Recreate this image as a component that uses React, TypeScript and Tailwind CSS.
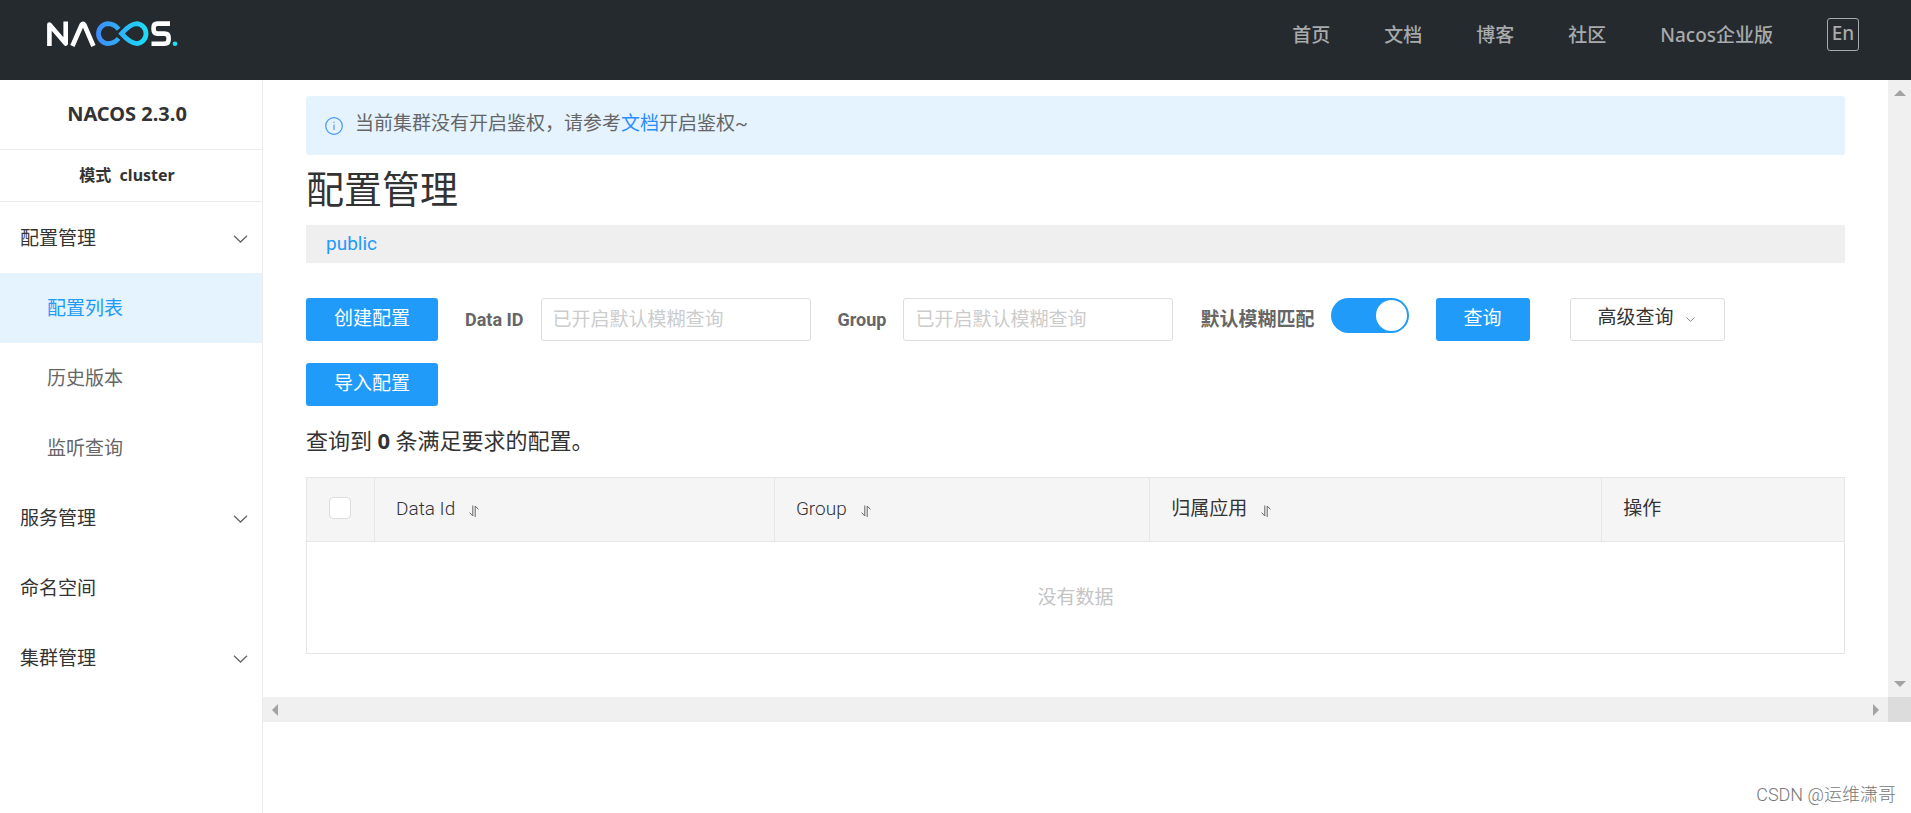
import { useState } from 'react';

const NAV_LINKS = ['首页', '文档', '博客', '社区', 'Nacos企业版'];

interface MenuItem {
  label: string;
  expandable?: boolean;
  child?: boolean;
}

const MENU: MenuItem[] = [
  { label: '配置管理', expandable: true },
  { label: '配置列表', child: true },
  { label: '历史版本', child: true },
  { label: '监听查询', child: true },
  { label: '服务管理', expandable: true },
  { label: '命名空间' },
  { label: '集群管理', expandable: true },
];

function Logo() {
  return (
    <svg width="132" height="26" viewBox="0 0 132 26" fill="none" role="img" aria-label="Nacos">
      <defs>
        <linearGradient id="loop" x1="48" y1="0" x2="102" y2="0" gradientUnits="userSpaceOnUse">
          <stop offset="0" stopColor="#4088fb" />
          <stop offset="1" stopColor="#1ae1f8" />
        </linearGradient>
      </defs>
      <g stroke="#fff" strokeWidth="4.6" strokeLinejoin="round">
        <path d="M2.4 25V3.6L18.7 22.6V0.6" />
        <path d="M25.4 25L34.6 4Q36 1.6 37.4 4L46.4 25" />
        <path d="M123 2.6H110.5Q106.6 2.6 106.6 6.5V8.5Q106.6 12.6 110.5 12.6H117.5Q121.6 12.6 121.6 16.5V18.8Q121.6 22.7 117.5 22.7H104.5" />
      </g>
      <path
        d="M71.6 8.2Q67 2.7 60.5 2.7A10 10 0 0 0 60.5 22.6Q67 22.6 71.6 17.5M90 2.7A10 10 0 0 1 90 22.6Q83.5 22.6 74.5 12.7Q83.5 2.7 90 2.7Z"
        stroke="url(#loop)"
        strokeWidth="4.8"
      />
      <circle cx="128" cy="22.8" r="2.3" fill="#1ae1f8" />
    </svg>
  );
}

function Chevron({ className }: { className: string }) {
  return (
    <svg className={className} viewBox="0 0 14 8" fill="none" stroke="currentColor" aria-hidden="true">
      <path d="M0.5 0.7L7 7L13.5 0.7" strokeWidth="1.3" />
    </svg>
  );
}

function InfoIcon() {
  return (
    <svg className="size-[18px] shrink-0" viewBox="0 0 18 18" fill="none" stroke="#4494f9" aria-hidden="true">
      <circle cx="9" cy="9" r="8.3" strokeWidth="1.2" />
      <path d="M9 7.5V13M9 4.8V6" strokeWidth="1.1" />
    </svg>
  );
}

function SortIcon() {
  return (
    <svg className="mt-1 h-3 w-[10px]" viewBox="0 0 10 12" fill="none" stroke="#666" aria-hidden="true">
      <path d="M3.8 0.5V11L0.6 7.6M6.2 12V1L9.4 4.4" strokeWidth="1" />
    </svg>
  );
}

function Arrow({ points }: { points: string }) {
  return (
    <svg className="size-3" viewBox="0 0 12 12" fill="#a3a3a3" aria-hidden="true">
      <polygon points={points} />
    </svg>
  );
}

function Header() {
  return (
    <header className="flex h-20 shrink-0 items-start justify-between bg-[#252a2f] pr-[52px] pl-[47px] text-[19px] leading-[28px] font-medium text-[#a8aaac]">
      <a href="#" className="pt-[21px]"><Logo /></a>
      <nav className="flex gap-[54px] pt-[18px]">
        {NAV_LINKS.map((link) => (
          <a key={link} href="#" className="pt-[3px]">{link}</a>
        ))}
        <button className="h-[33px] w-8 rounded-[3px] border border-[#a8aaac] pb-1 leading-[26px]">En</button>
      </nav>
    </header>
  );
}

function Sidebar() {
  const [active, setActive] = useState('配置列表');
  return (
    <aside className="w-[263px] shrink-0 border-r border-[#ebebeb] bg-white">
      <h1 className="flex h-[70px] items-center justify-center border-b border-[#ebebeb] pr-2 pb-[2px] text-xl font-bold">
        NACOS 2.3.0
      </h1>
      <div className="flex h-[52px] items-center justify-center border-b border-[#ebebeb] pr-2 pb-[2px] text-base font-bold">
        模式&nbsp; cluster
      </div>
      <ul className="pt-px">
        {MENU.map((item) => (
          <li key={item.label}>
            <button
              onClick={() => setActive(item.label)}
              className={`flex h-[70px] w-full items-center justify-between pr-[14px] text-left ${
                item.child ? 'pl-[47px]' : 'pl-5'
              } ${item.label === active ? 'bg-[#e4f3fe] text-[#209bfa]' : item.child ? 'text-[#666]' : ''}`}
            >
              {item.label}
              {item.expandable && <Chevron className="mt-[2px] h-2 w-[15px] text-[#666]" />}
            </button>
          </li>
        ))}
      </ul>
    </aside>
  );
}

function Field({ id, label }: { id: string; label: string }) {
  return (
    <div className="flex items-center gap-[17px]">
      <label htmlFor={id} className="text-lg font-bold text-[#666]">{label}</label>
      <input
        id={id}
        placeholder="已开启默认模糊查询"
        className="h-[43px] w-[270px] rounded-[3px] border border-[#ddd] px-[11px] placeholder:text-[#ccc]"
      />
    </div>
  );
}

function Toolbar() {
  const [fuzzy, setFuzzy] = useState(true);
  return (
    <div className="mt-[35px] flex flex-wrap items-center gap-x-[27px] gap-y-[22px]">
      <button className="h-[43px] rounded-[3px] bg-[#209bfa] px-7 pb-[2px] text-white">创建配置</button>
      <Field id="dataId" label="Data ID" />
      <Field id="group" label="Group" />
      <div className="flex h-[43px] items-start gap-4">
        <label htmlFor="fuzzy" className="self-center font-bold text-[#666]">默认模糊匹配</label>
        <input
          id="fuzzy"
          type="checkbox"
          role="switch"
          checked={fuzzy}
          onChange={(e) => setFuzzy(e.target.checked)}
          className="h-[35px] w-[78px] appearance-none rounded-full bg-[#ccc] p-[2px] before:block before:size-[31px] before:rounded-full before:bg-white checked:bg-[#209bfa] checked:before:ml-auto"
        />
      </div>
      <button className="h-[43px] rounded-[3px] bg-[#209bfa] px-7 pb-[2px] text-white">查询</button>
      <button className="ml-[13px] flex h-[43px] items-center gap-3 rounded-[3px] border border-[#ddd] pr-[29px] pb-1 pl-[27px]">
        高级查询 <Chevron className="mt-1 h-[5px] w-[9px] text-[#666]" />
      </button>
      <div className="basis-full">
        <button className="h-[43px] rounded-[3px] bg-[#209bfa] px-7 pb-[2px] text-white">导入配置</button>
      </div>
    </div>
  );
}

function ConfigTable() {
  return (
    <table className="mt-[21px] w-full table-fixed border-collapse border border-[#e6e6e6]">
      <thead className="bg-[#f5f5f5] text-left">
        <tr className="h-16 border-b border-[#e6e6e6]">
          <th className="w-[68px] pb-1 pl-[22px]">
            <input
              type="checkbox"
              aria-label="全选"
              className="block size-[22px] appearance-none rounded-[4px] border border-[#ddd] bg-white checked:bg-[#209bfa]"
            />
          </th>
          <th className="w-[26%] border-l border-[#e6e6e6] px-[21px] pb-[2px] font-light">
            <div className="flex items-center gap-[14px]">Data Id <SortIcon /></div>
          </th>
          <th className="w-[24.4%] border-l border-[#e6e6e6] px-[21px] pb-[2px] font-light">
            <div className="flex items-center gap-[14px]">Group <SortIcon /></div>
          </th>
          <th className="w-[29.4%] border-l border-[#e6e6e6] px-[21px] pb-[2px] font-normal">
            <div className="flex items-center gap-[14px]">归属应用 <SortIcon /></div>
          </th>
          <th className="border-l border-[#e6e6e6] px-[21px] pb-[2px] font-normal">操作</th>
        </tr>
      </thead>
      <tbody>
        <tr>
          <td colSpan={5} className="h-[112px] text-center text-[#c4c4c4]">没有数据</td>
        </tr>
      </tbody>
    </table>
  );
}

export default function App() {
  return (
    <div className="flex min-h-screen flex-col bg-white font-['Noto_Sans','Noto_Sans_CJK_SC',sans-serif] text-[19px] leading-[28px] text-[#333]">
      <Header />
      <div className="flex grow">
        <Sidebar />
        <div className="flex min-w-0 grow flex-col font-['Roboto','Noto_Sans_CJK_SC',sans-serif]">
          <div className="flex">
            <main className="min-w-0 grow px-[43px] pt-4 pb-[43px]">
              <div className="flex h-[59px] items-start gap-3 rounded-[3px] bg-[#e4f3fe] pt-[14px] pl-[19px] text-[#666]">
                <span className="pt-[7px]"><InfoIcon /></span>
                <p>当前集群没有开启鉴权，请参考<a href="#" className="text-[#298dff]">文档</a>开启鉴权~</p>
              </div>
              <h2 className="pt-[10px] pb-[10px] text-[38px] leading-[50px]">配置管理</h2>
              <div className="flex h-[38px] items-center bg-[#efefef] px-5">
                <a href="#" className="text-[#209bfa]">public</a>
              </div>
              <Toolbar />
              <p className="mt-[22px] text-[22px]">
                查询到 <strong className="font-['Noto_Sans',sans-serif] leading-none font-bold">0</strong> 条满足要求的配置。
              </p>
              <ConfigTable />
            </main>
            <div className="flex w-[23px] shrink-0 flex-col items-center justify-between bg-[#f0f0f0] py-[7px]">
              <Arrow points="0,9 6,3 12,9" />
              <Arrow points="0,3 12,3 6,9" />
            </div>
          </div>
          <div className="flex h-[25px]">
            <div className="flex grow items-center justify-between bg-[#f0f0f0] px-[6px]">
              <Arrow points="9,0 9,12 3,6" />
              <Arrow points="3,0 9,6 3,12" />
            </div>
            <div className="w-[23px] shrink-0 bg-[#dcdcdc]" />
          </div>
          <footer className="mt-auto pr-[15px] pb-1 text-right text-lg font-light text-[#777]">CSDN @运维潇哥</footer>
        </div>
      </div>
    </div>
  );
}
